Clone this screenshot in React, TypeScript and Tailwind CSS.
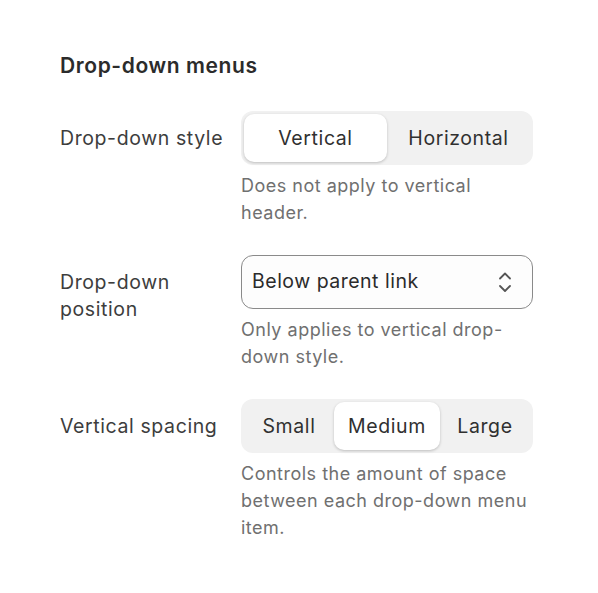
import { useState } from "react";

function Segmented({
  options,
  value,
  onChange,
  widths,
}: {
  options: string[];
  value: string;
  onChange: (v: string) => void;
  widths?: string[];
}) {
  return (
    <div className="flex h-[54px] w-full rounded-[12px] bg-[#f1f1f1] p-[3px]">
      {options.map((o, i) => {
        const active = o === value;
        return (
          <button
            key={o}
            type="button"
            onClick={() => onChange(o)}
            className={
              (widths ? widths[i] : "flex-1") +
              " flex h-full items-center justify-center rounded-[10px] pt-px text-[19.5px] tracking-[0.6px] text-[#303030] " +
              (active ? "bg-white shadow-[0_1px_3px_rgba(0,0,0,0.22)]" : "")
            }
          >
            {o}
          </button>
        );
      })}
    </div>
  );
}

function Row({
  label,
  help,
  children,
}: {
  label: React.ReactNode;
  help: React.ReactNode;
  children: React.ReactNode;
}) {
  return (
    <div className="grid grid-cols-[181px_292px]">
      <div className="pt-[14px] pr-3 text-[19.5px] leading-[27px] tracking-[0.6px] text-[#3d3d3d]">{label}</div>
      <div>
        {children}
        <p className="mt-[7px] text-[18px] leading-[27px] tracking-[0.5px] text-[#707070]">{help}</p>
      </div>
    </div>
  );
}

export default function App() {
  const [style, setStyle] = useState("Vertical");
  const [spacing, setSpacing] = useState("Medium");

  return (
    <div
      className="min-h-screen bg-white px-[60px] pt-[52px]"
      style={{ fontFamily: "Inter, 'Noto Sans', sans-serif" }}
    >
      <h2 className="text-[21px] font-semibold leading-[28px] tracking-[0.6px] text-[#2b2b2b]">Drop-down menus</h2>
      <div className="mt-[31px] flex flex-col gap-[29px]">
        <Row label="Drop-down style" help="Does not apply to vertical header.">
          <Segmented options={["Vertical", "Horizontal"]} value={style} onChange={setStyle} />
        </Row>
        <Row label="Drop-down position" help="Only applies to vertical drop-down style.">
          <div className="flex h-[54px] w-full items-center justify-between rounded-[12px] border border-[#8a8a8a] bg-[#fdfdfd] pl-[10px] pr-[20px]">
            <span className="text-[19.5px] tracking-[0.5px] text-[#2b2b2b]">Below parent link</span>
            <svg width="14" height="22" viewBox="0 0 14 22" fill="none" stroke="#555" strokeWidth="1.8" strokeLinecap="round" strokeLinejoin="round">
              <path d="M2 7.5 L7 2.5 L12 7.5" />
              <path d="M2 15 L7 20 L12 15" />
            </svg>
          </div>
        </Row>
        <Row label="Vertical spacing" help="Controls the amount of space between each drop-down menu item.">
          <Segmented
            options={["Small", "Medium", "Large"]}
            value={spacing}
            onChange={setSpacing}
            widths={["w-[90px]", "w-[106px]", "flex-1"]}
          />
        </Row>
      </div>
    </div>
  );
}
